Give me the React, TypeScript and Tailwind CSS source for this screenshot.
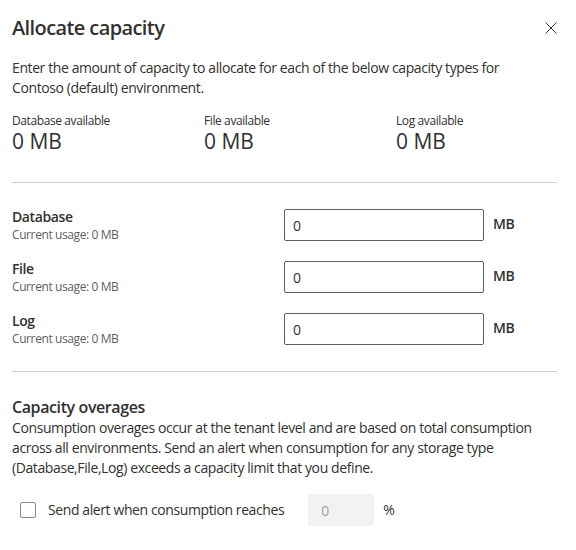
export default function App() {
  const rows = ["Database", "File", "Log"]
  const stats = ["Database available", "File available", "Log available"]

  return (
    <div className="w-[576px] h-[550px] bg-white pl-3 pr-[19px] text-[#323130] font-['Open_Sans',sans-serif] tracking-[-0.025em] overflow-hidden">
      {/* Header */}
      <div className="flex items-center justify-between pt-[14px]">
        <h1 className="text-[20px] leading-[28px] font-semibold tracking-[-0.03em]">Allocate capacity</h1>
        <svg width="12" height="12" viewBox="0 0 12 12" className="text-[#323130]">
          <path d="M0.5 0.5 L11.5 11.5 M11.5 0.5 L0.5 11.5" stroke="currentColor" strokeWidth="1" />
        </svg>
      </div>

      <p className="mt-4 max-w-[510px] text-[14px] leading-[20px]">
        Enter the amount of capacity to allocate for each of the below capacity types for Contoso (default) environment.
      </p>

      {/* Available */}
      <div className="mt-[15px] grid grid-cols-[192px_192px_1fr]">
        {stats.map((s) => (
          <div key={s}>
            <div className="text-[12px] leading-[16px]">{s}</div>
            <div className="text-[21px] leading-[24px] tracking-normal">0 MB</div>
          </div>
        ))}
      </div>

      <div className="mt-[29px] border-t border-[#d2d0ce]" />

      {/* Inputs */}
      <div className="mt-6 flex flex-col gap-4">
        {rows.map((r) => (
          <div key={r} className="flex items-start">
            <div className="w-[272px]">
              <div className="text-[14px] leading-[20px] font-semibold">{r}</div>
              <div className="text-[12px] leading-[16px] text-[#605e5c]">Current usage: 0 MB</div>
            </div>
            <div className="mt-[2px] w-[200px] h-[32px] border border-[#605e5c] rounded-[2px] flex items-center pl-2 text-[14px] text-[#323130]">
              0
            </div>
            <div className="ml-[9px] mt-[7px] text-[14px] leading-[20px] font-semibold">MB</div>
          </div>
        ))}
      </div>

      <div className="mt-6 border-t border-[#d2d0ce]" />

      {/* Overages */}
      <h2 className="mt-6 text-[16px] leading-[22px] font-semibold">Capacity overages</h2>
      <p className="text-[14px] leading-[20px]">
        Consumption overages occur at the tenant level and are based on total consumption across all environments. Send an alert when consumption for any storage type (Database,File,Log) exceeds a capacity limit that you define.
      </p>

      <div className="mt-4 flex items-center h-[32px]">
        <div className="ml-2 w-[16px] h-[16px] border border-[#8a8886] rounded-[2px] bg-white" />
        <span className="ml-3 text-[14px] leading-[20px]">Send alert when consumption reaches</span>
        <div className="ml-6 w-[66px] h-[32px] bg-[#f3f2f1] rounded-[2px] flex items-center pl-[13px] text-[14px] text-[#a19f9d]">
          0
        </div>
        <span className="ml-[9px] text-[14px] leading-[20px]">%</span>
      </div>
    </div>
  )
}
